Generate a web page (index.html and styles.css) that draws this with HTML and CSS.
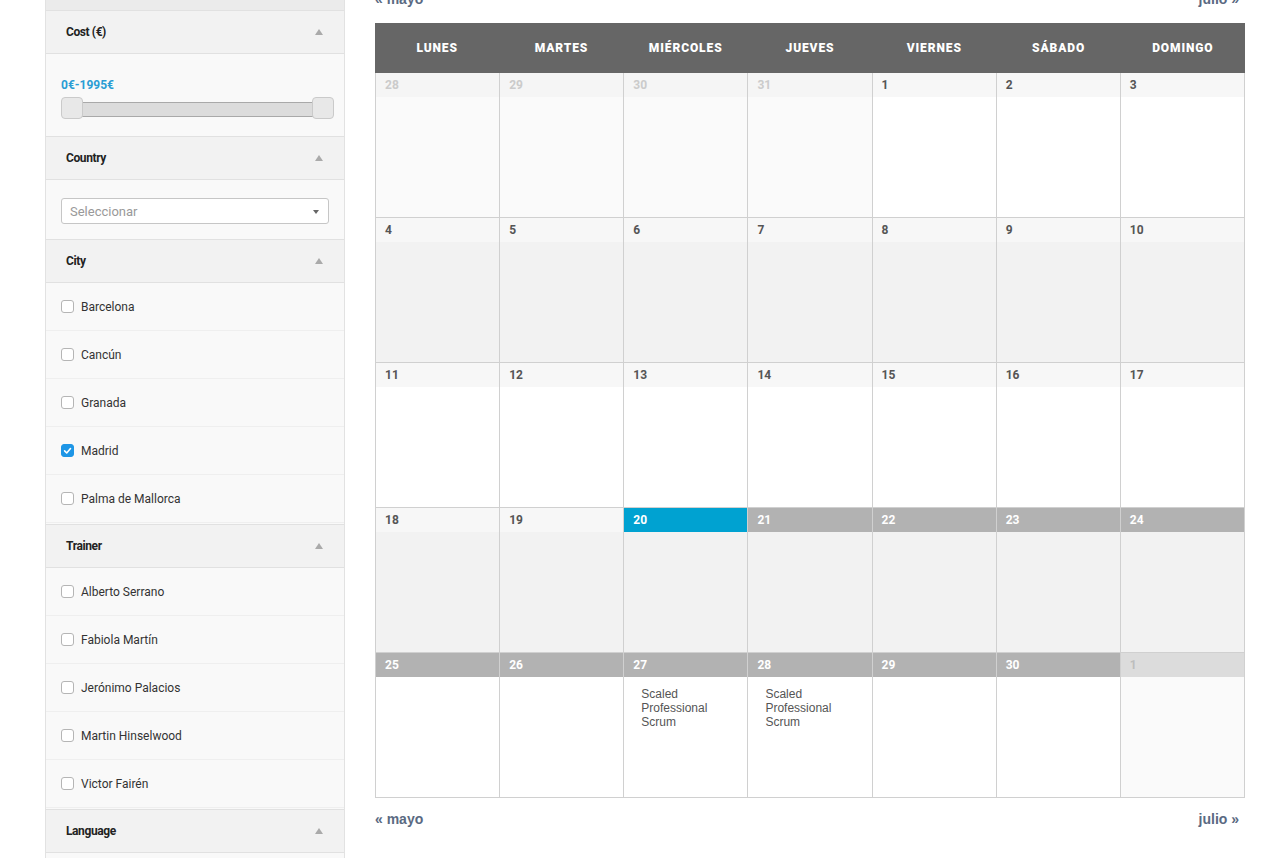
FILE: index.html
```html
<!DOCTYPE html>
<html lang="es">
<head>
    <meta charset="UTF-8">
    <meta name="viewport" content="width=device-width, initial-scale=1.0">
    <title>Calendario de cursos</title>
    <link rel="stylesheet" href="styles.css">
</head>
<body>
    <div class="page">
        <aside class="sidebar">
            <div class="sidebar-top"></div>

            <div class="filter-head">Cost (€) <span class="caret"></span></div>
            <div class="filter-body cost">
                <div class="cost-label">0€-1995€</div>
                <div class="range">
                    <div class="range-track"></div>
                    <div class="range-handle left"></div>
                    <div class="range-handle right"></div>
                </div>
            </div>

            <div class="filter-head">Country <span class="caret"></span></div>
            <div class="filter-body country">
                <div class="select">Seleccionar <span class="select-arrow"></span></div>
            </div>

            <div class="filter-head">City <span class="caret"></span></div>
            <label class="option"><span class="check"></span>Barcelona</label>
            <label class="option"><span class="check"></span>Cancún</label>
            <label class="option"><span class="check"></span>Granada</label>
            <label class="option">
                <span class="check checked">
                    <svg viewBox="0 0 13 13" width="13" height="13"><path d="M3.6 6.9l2.1 2.1 3.8-4.4" fill="none" stroke="#fff" stroke-width="1.6" stroke-linecap="round" stroke-linejoin="round"/></svg>
                </span>Madrid
            </label>
            <label class="option"><span class="check"></span>Palma de Mallorca</label>

            <div class="filter-head">Trainer <span class="caret"></span></div>
            <label class="option"><span class="check"></span>Alberto Serrano</label>
            <label class="option"><span class="check"></span>Fabiola Martín</label>
            <label class="option"><span class="check"></span>Jerónimo Palacios</label>
            <label class="option"><span class="check"></span>Martin Hinselwood</label>
            <label class="option"><span class="check"></span>Victor Fairén</label>

            <div class="filter-head">Language <span class="caret"></span></div>
            <label class="option"><span class="check"></span>Español</label>
            <label class="option"><span class="check"></span>English</label>
        </aside>

        <main class="main">
            <nav class="month-nav top">
                <a href="#">« mayo</a>
                <a href="#">julio »</a>
            </nav>

            <div class="calendar">
                <div class="cal-head">
                    <div>Lunes</div>
                    <div>Martes</div>
                    <div>Miércoles</div>
                    <div>Jueves</div>
                    <div>Viernes</div>
                    <div>Sábado</div>
                    <div>Domingo</div>
                </div>

                <div class="cal-week">
                    <div class="day other"><div class="day-num">28</div><div class="day-body"></div></div>
                    <div class="day other"><div class="day-num">29</div><div class="day-body"></div></div>
                    <div class="day other"><div class="day-num">30</div><div class="day-body"></div></div>
                    <div class="day other"><div class="day-num">31</div><div class="day-body"></div></div>
                    <div class="day"><div class="day-num">1</div><div class="day-body"></div></div>
                    <div class="day"><div class="day-num">2</div><div class="day-body"></div></div>
                    <div class="day"><div class="day-num">3</div><div class="day-body"></div></div>
                </div>

                <div class="cal-week">
                    <div class="day"><div class="day-num">4</div><div class="day-body"></div></div>
                    <div class="day"><div class="day-num">5</div><div class="day-body"></div></div>
                    <div class="day"><div class="day-num">6</div><div class="day-body"></div></div>
                    <div class="day"><div class="day-num">7</div><div class="day-body"></div></div>
                    <div class="day"><div class="day-num">8</div><div class="day-body"></div></div>
                    <div class="day"><div class="day-num">9</div><div class="day-body"></div></div>
                    <div class="day"><div class="day-num">10</div><div class="day-body"></div></div>
                </div>

                <div class="cal-week">
                    <div class="day"><div class="day-num">11</div><div class="day-body"></div></div>
                    <div class="day"><div class="day-num">12</div><div class="day-body"></div></div>
                    <div class="day"><div class="day-num">13</div><div class="day-body"></div></div>
                    <div class="day"><div class="day-num">14</div><div class="day-body"></div></div>
                    <div class="day"><div class="day-num">15</div><div class="day-body"></div></div>
                    <div class="day"><div class="day-num">16</div><div class="day-body"></div></div>
                    <div class="day"><div class="day-num">17</div><div class="day-body"></div></div>
                </div>

                <div class="cal-week">
                    <div class="day"><div class="day-num">18</div><div class="day-body"></div></div>
                    <div class="day"><div class="day-num">19</div><div class="day-body"></div></div>
                    <div class="day today"><div class="day-num">20</div><div class="day-body"></div></div>
                    <div class="day upcoming"><div class="day-num">21</div><div class="day-body"></div></div>
                    <div class="day upcoming"><div class="day-num">22</div><div class="day-body"></div></div>
                    <div class="day upcoming"><div class="day-num">23</div><div class="day-body"></div></div>
                    <div class="day upcoming"><div class="day-num">24</div><div class="day-body"></div></div>
                </div>

                <div class="cal-week">
                    <div class="day upcoming"><div class="day-num">25</div><div class="day-body"></div></div>
                    <div class="day upcoming"><div class="day-num">26</div><div class="day-body"></div></div>
                    <div class="day upcoming"><div class="day-num">27</div><div class="day-body"><a class="event" href="#">Scaled Professional Scrum</a></div></div>
                    <div class="day upcoming"><div class="day-num">28</div><div class="day-body"><a class="event" href="#">Scaled Professional Scrum</a></div></div>
                    <div class="day upcoming"><div class="day-num">29</div><div class="day-body"></div></div>
                    <div class="day upcoming"><div class="day-num">30</div><div class="day-body"></div></div>
                    <div class="day next"><div class="day-num">1</div><div class="day-body"></div></div>
                </div>
            </div>

            <nav class="month-nav bottom">
                <a href="#">« mayo</a>
                <a href="#">julio »</a>
            </nav>
        </main>
    </div>
</body>
</html>
```

FILE: styles.css
```css
body {
    margin: 0;
    background: #fff;
    font-family: Roboto, "Liberation Sans", Arial, sans-serif;
    color: #333;
}

.page {
    display: flex;
    align-items: flex-start;
    gap: 30px;
    padding-left: 45px;
}

/* ---- filters ---- */

.sidebar {
    width: 300px;
    box-sizing: border-box;
    background: #f9f9f9;
    border-left: 1px solid #e2e2e2;
    border-right: 1px solid #e2e2e2;
}

.sidebar-top {
    height: 10px;
    background: #ebebeb;
}

.filter-head {
    display: flex;
    justify-content: space-between;
    align-items: center;
    height: 42px;
    padding: 0 21px 0 20px;
    background: #f2f2f2;
    border-top: 1px solid #e1e1e1;
    border-bottom: 1px solid #e1e1e1;
    font-size: 12px;
    font-weight: 700;
    letter-spacing: -0.4px;
    color: #222;
}

.option + .filter-head {
    margin-top: 1px;
}

.caret {
    width: 0;
    height: 0;
    border-left: 4px solid transparent;
    border-right: 4px solid transparent;
    border-bottom: 6px solid #aaa;
}

.filter-body.cost {
    padding: 23px 15px 18px;
}

.cost-label {
    font-size: 12px;
    line-height: 16px;
    font-weight: 700;
    color: #2a9dd4;
}

.range {
    position: relative;
    height: 21px;
    margin: 4px -5px 0 0;
}

.range-track {
    position: absolute;
    left: 12px;
    right: 12px;
    top: 5px;
    height: 13px;
    background: #dcdcdc;
    border-top: 1px solid #a9a9a9;
    border-bottom: 1px solid #a9a9a9;
}

.range-handle {
    position: absolute;
    top: 0;
    width: 22px;
    height: 22px;
    box-sizing: border-box;
    background: #e8e8e8;
    border: 1px solid #cacaca;
    border-radius: 4px;
}

.range-handle.left { left: 0; }
.range-handle.right { right: 0; }

.filter-body.country {
    padding: 18px 15px 15px;
}

.select {
    position: relative;
    display: flex;
    align-items: center;
    height: 26px;
    box-sizing: border-box;
    padding-left: 8px;
    background: #fff;
    border: 1px solid #c6c6c6;
    border-radius: 3px;
    font-size: 13px;
    color: #999;
}

.select-arrow {
    position: absolute;
    right: 9px;
    top: 11px;
    border-left: 3px solid transparent;
    border-right: 3px solid transparent;
    border-top: 4px solid #666;
}

.option {
    display: flex;
    align-items: center;
    gap: 7px;
    height: 47px;
    padding: 0 15px;
    border-bottom: 1px solid #efefef;
    font-size: 12px;
    color: #333;
    cursor: pointer;
}

.check {
    display: block;
    width: 13px;
    height: 13px;
    box-sizing: border-box;
    background: #fff;
    border: 1px solid #b5b5b5;
    border-radius: 3px;
}

.check.checked {
    background: #1e96e6;
    border-color: #1e96e6;
}

.check svg {
    display: block;
    margin: -1px;
}

/* ---- calendar ---- */

.main {
    width: 870px;
    margin-top: -11px;
}

.month-nav {
    display: flex;
    justify-content: space-between;
    height: 20px;
    line-height: 20px;
    padding-right: 6px;
    font-family: "Liberation Sans", Arial, sans-serif;
    font-size: 14px;
    font-weight: 700;
}

.month-nav a {
    color: #5a6a82;
    text-decoration: none;
}

.month-nav.top { margin-bottom: 14px; }
.month-nav.bottom { margin-top: 11px; }

.cal-head {
    display: grid;
    grid-template-columns: repeat(7, 1fr);
    align-items: center;
    height: 50px;
    background: #666;
    color: #fff;
    text-align: center;
    text-transform: uppercase;
    font-size: 12px;
    font-weight: 900;
    letter-spacing: 0.9px;
}

.cal-week {
    display: grid;
    grid-template-columns: repeat(7, 1fr);
    border-left: 1px solid #d0d0d0;
}

.day {
    display: flex;
    flex-direction: column;
    height: 145px;
    box-sizing: border-box;
    border-right: 1px solid #d0d0d0;
    border-bottom: 1px solid #d0d0d0;
}

.day-num {
    height: 24px;
    line-height: 24px;
    padding-left: 9px;
    background: #f7f7f7;
    font-size: 12px;
    font-weight: 700;
    color: #555;
}

.day-body {
    flex: 1;
    background: #fff;
}

.cal-week:nth-child(odd) .day-body {
    background: #f2f2f2;
}

.day.other .day-num {
    background: #f5f5f5;
    color: #cbcbcb;
}

.day.other .day-body,
.day.next .day-body {
    background: #fafafa;
}

.day.today .day-num {
    background: #00a2d1;
    color: #fff;
}

.day.upcoming .day-num {
    background: #b2b2b2;
    color: #fff;
}

.day.next .day-num {
    background: #dcdcdc;
    color: #bdbdbd;
}

.event {
    display: block;
    width: 80px;
    padding: 10px 0 0 17px;
    font-family: "Liberation Sans", Arial, sans-serif;
    font-size: 12px;
    line-height: 14px;
    color: #555;
    text-decoration: none;
}
```
